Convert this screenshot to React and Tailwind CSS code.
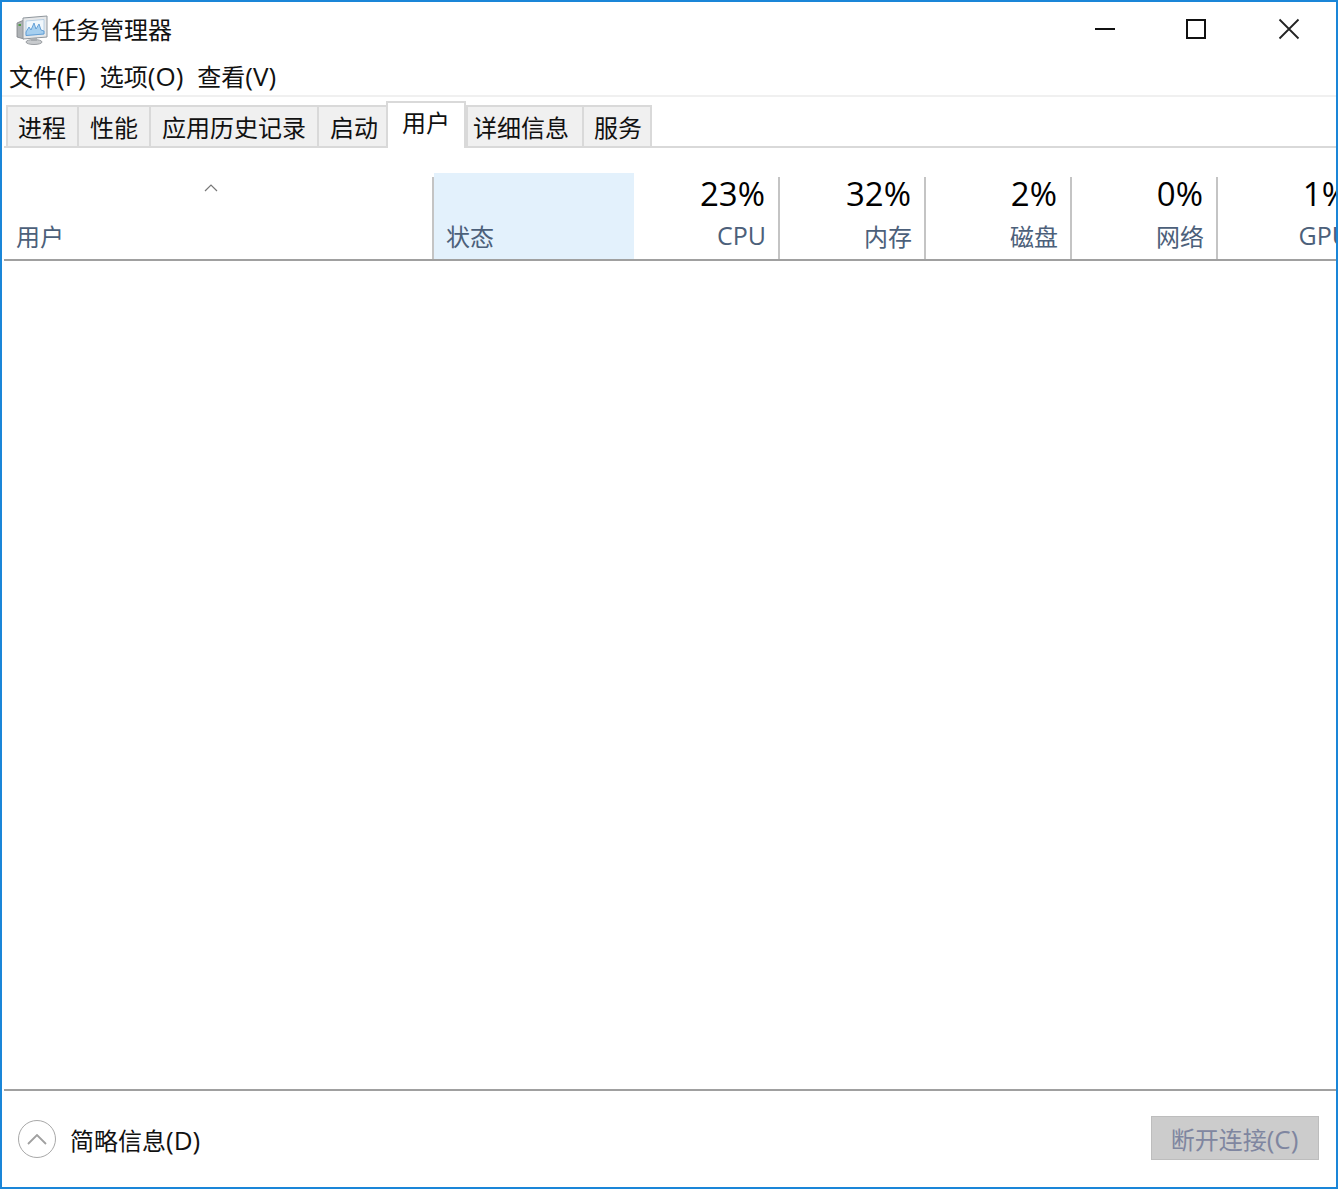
import React from 'react';

const font = "font-['Open_Sans','Noto_Sans_CJK_SC',sans-serif]";

const tabs = [
  { label: '进程', cls: 'w-[71px] pl-[10px]' },
  { label: '性能', cls: 'w-[72px] pl-[11px]' },
  { label: '应用历史记录', cls: 'w-[168px] pl-[11px]' },
  { label: '启动', cls: 'w-[69px] pl-[11px]' },
  { label: '用户', cls: 'w-[80px] pl-[14px]', active: true },
  { label: '详细信息', cls: 'w-[116px] pl-[5px]' },
  { label: '服务', cls: 'w-[70px] pl-[10px]' },
];

const columns = [
  { value: '23%', label: 'CPU', cls: 'pr-[12px]', labelCls: 'text-[25px] leading-[28px] mb-[4px]' },
  { value: '32%', label: '内存', cls: 'pr-[12px]', labelCls: 'text-[24px] leading-[32px]' },
  { value: '2%', label: '磁盘', cls: 'pr-[12px]', labelCls: 'text-[24px] leading-[32px]' },
  { value: '0%', label: '网络', cls: 'pr-[12px]', labelCls: 'text-[24px] leading-[32px]' },
  { value: '1%', label: 'GPU', cls: 'pr-[12px] border-r-0', labelCls: 'text-[25px] leading-[28px] mb-[4px]' },
];

const Accel = ({ children }) => <span className="text-[26px]">{children}</span>;

const AppIcon = () => (
  <svg width="32" height="30" viewBox="0 0 32 30" className="shrink-0">
    <path d="M1 8 L8 5 L8 24 L1 22 Z" fill="#aeb2b5" stroke="#7d8287" strokeWidth="0.8" />
    <rect x="2.5" y="9" width="2.5" height="2" fill="#4f9a45" />
    <path d="M7 3 L31 1 L31 22 L7 24 Z" fill="#e6e8ea" stroke="#8f969c" />
    <path d="M10 6 L28 4.5 L28 19 L10 20.5 Z" fill="#f0f7fc" stroke="#a9c7e0" strokeWidth="0.8" />
    <path d="M10 17 L13 12 L15 15 L18 8 L20 14 L23 9 L25 15 L28 16 L28 19 L10 20.5 Z" fill="#a6cfef" stroke="#4f93d1" strokeWidth="0.8" />
    <ellipse cx="18" cy="27" rx="8" ry="2.5" fill="#c8cbce" stroke="#9a9ea2" />
    <rect x="15" y="23" width="6" height="3" fill="#a8acb0" />
  </svg>
);

const WindowButtons = () => (
  <div className="flex items-center -mt-[2px]">
    <div className="w-[20px] h-[2px] bg-[#111] mr-[71px]"></div>
    <div className="w-[20px] h-[20px] border-2 border-[#111] mr-[72px]"></div>
    <svg width="22" height="22" viewBox="0 0 22 22" className="mr-[36px]">
      <path d="M1.5 1.5 L20.5 20.5 M20.5 1.5 L1.5 20.5" stroke="#222" strokeWidth="1.8" fill="none" />
    </svg>
  </div>
);

const App = () => {
  return (
    <div className={`w-[1338px] h-[1189px] flex flex-col bg-white border-2 border-[#1a86d8] overflow-hidden text-[#111] ${font}`}>
      <div className="h-[56px] shrink-0 flex items-center justify-between pl-[14px]">
        <div className="flex items-center gap-[4px]">
          <AppIcon />
          <span className="text-[24px] leading-none">任务管理器</span>
        </div>
        <WindowButtons />
      </div>

      <div className="h-[39px] shrink-0 flex items-center pl-[7px] pb-[2px] gap-[14px] text-[24px] leading-none border-b-2 border-[#f0f0f0]">
        <span>文件<Accel>(F)</Accel></span>
        <span>选项<Accel>(O)</Accel></span>
        <span>查看<Accel>(V)</Accel></span>
      </div>

      <div className="h-[51px] shrink-0 flex items-end ml-[2px] pl-[2px] border-b-2 border-[#d9d9d9]">
        {tabs.map((tab) =>
          tab.active ? (
            <div
              key={tab.label}
              className={`${tab.cls} h-[47px] -mb-[2px] bg-white border-2 border-b-0 border-[#d9d9d9] pt-[4px] text-[24px] leading-[32px]`}
            >
              {tab.label}
            </div>
          ) : (
            <div
              key={tab.label}
              className={`${tab.cls} h-[41px] pt-[5px] bg-[#f0f0f0] border-t-2 border-l-2 border-[#d9d9d9] last:border-r-2 text-[24px] leading-[32px]`}
            >
              {tab.label}
            </div>
          )
        )}
      </div>

      <div className="h-[113px] shrink-0 flex items-end ml-[2px] pt-[25px] border-b-2 border-[#a0a0a0] overflow-hidden">
        <div className="relative w-[428px] h-full shrink-0 flex items-end pl-[12px] pb-[6px] text-[24px] leading-[32px] text-[#4c607a]">
          <svg width="14" height="8" viewBox="0 0 14 8" className="absolute left-[200px] top-[11px]">
            <path d="M1 7 L7 1 L13 7" stroke="#777" strokeWidth="1.2" fill="none" />
          </svg>
          用户
        </div>
        <div className="w-[2px] h-[82px] shrink-0 bg-[#c4c4c4]"></div>
        <div className="w-[200px] h-full shrink-0 bg-[#e3f1fc] flex items-end pl-[12px] pb-[6px] text-[24px] leading-[32px] text-[#4c607a]">
          状态
        </div>
        {columns.map((col) => (
          <div
            key={col.label}
            className={`${col.cls} w-[146px] h-[82px] shrink-0 flex flex-col items-end justify-end border-r-2 border-[#c4c4c4] pb-[6px]`}
          >
            <div className="text-[33px] leading-[34px] mb-[10px] mr-[1px] text-black">{col.value}</div>
            <div className={`${col.labelCls} text-[#4c607a]`}>{col.label}</div>
          </div>
        ))}
      </div>

      <div className="flex-1"></div>

      <div className="h-[98px] shrink-0 flex items-center justify-between ml-[2px] border-t-2 border-[#a0a0a0]">
        <div className="flex items-center pl-[14px] gap-[14px]">
          <div className="w-[38px] h-[38px] rounded-full border border-[#a8a8a8] flex items-center justify-center">
            <svg width="20" height="11" viewBox="0 0 20 11">
              <path d="M1 10 L10 1 L19 10" stroke="#a0a0a0" strokeWidth="1.8" fill="none" />
            </svg>
          </div>
          <span className="text-[24px] leading-none pt-[2px]">简略信息<Accel>(D)</Accel></span>
        </div>
        <div className="w-[168px] h-[44px] mr-[17px] -mt-[2px] pt-[1px] pr-[1px] bg-[#cccccc] border border-[#bdbdbd] flex items-center justify-center text-[24px] leading-none text-[#7f86a0]">
          <span>断开连接<Accel>(C)</Accel></span>
        </div>
      </div>
    </div>
  );
};

export default App;
